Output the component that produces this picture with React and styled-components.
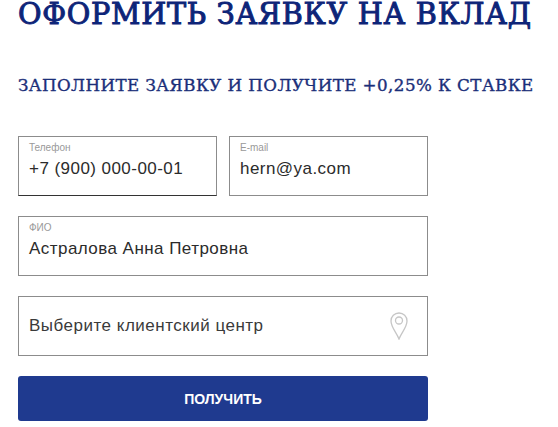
import styled, { createGlobalStyle } from "styled-components";

const Global = createGlobalStyle`
    html, body {
        margin: 0;
        padding: 0;
        background: #fff;
        overflow: hidden;
    }
`

const Page = styled.div`
    width: 558px;
    height: 427px;
    overflow: hidden;
    padding: 0 18px;
    box-sizing: border-box;
    font-family: "Liberation Sans", Arial, sans-serif;
`
const Title = styled.h1`
    margin: 0;
    font-family: "DejaVu Serif Condensed", "DejaVu Serif", serif;
    font-size: 29px;
    line-height: 28px;
    font-weight: 400;
    letter-spacing: 0.66px;
    -webkit-text-stroke: 0.9px #0d2478;
    color: #0d2478;
    white-space: nowrap;
    transform: scaleX(1.1);
    transform-origin: left center;
`
const Subtitle = styled.h2`
    margin: 46px 0 0;
    font-family: "DejaVu Serif Condensed", "DejaVu Serif", serif;
    font-size: 17.5px;
    line-height: 22px;
    font-weight: 400;
    letter-spacing: 0.42px;
    -webkit-text-stroke: 0.35px #1b2f7a;
    color: #1b2f7a;
    white-space: nowrap;
    transform: scaleX(1.06);
    transform-origin: left center;
`
const Form = styled.form`
    width: 410px;
    margin-top: 40px;
    display: flex;
    flex-direction: column;
    gap: 20px;
`
const Row = styled.div`
    display: grid;
    grid-template-columns: 1fr 1fr;
    gap: 12px;
`
const Field = styled.div`
    height: 60px;
    box-sizing: border-box;
    border: 1px solid #8c8c8c;
    border-bottom-color: ${({$active}) => $active ? '#333' : '#8c8c8c'};
    padding: 5px 10px 0;
    display: flex;
    flex-direction: column;
`
const Label = styled.label`
    font-size: 10px;
    line-height: 11px;
    color: #999;
`
const Value = styled.div`
    margin-top: 5px;
    font-size: 17px;
    line-height: 22px;
    letter-spacing: 0.45px;
    color: #2b2b2b;
    white-space: nowrap;
`
const SelectField = styled.div`
    height: 60px;
    box-sizing: border-box;
    border: 1px solid #8c8c8c;
    padding: 0 19px 0 10px;
    display: flex;
    align-items: center;
    justify-content: space-between;
`
const Placeholder = styled.span`
    font-size: 17px;
    letter-spacing: 0.5px;
    color: #3a3a3a;
`
const Submit = styled.button`
    height: 45px;
    border: 0;
    border-radius: 3px;
    background: #1f3a8f;
    color: #fff;
    font-family: "Liberation Sans", Arial, sans-serif;
    font-size: 14px;
    font-weight: 700;
    cursor: pointer;
`

const PinIcon = () => (
    <svg width="18" height="28" viewBox="0 0 18 28" fill="none" stroke="#c6c6c6" strokeWidth="1.3">
        <path d="M9 27 C7 21 1 15.5 1 9 C1 4.5 4.5 1 9 1 C13.5 1 17 4.5 17 9 C17 15.5 11 21 9 27 Z"/>
        <circle cx="9" cy="8.5" r="3.5"/>
    </svg>
)

const App = () => {
    return (
        <Page>
            <Global/>
            <Title>ОФОРМИТЬ ЗАЯВКУ НА ВКЛАД</Title>
            <Subtitle>ЗАПОЛНИТЕ ЗАЯВКУ И ПОЛУЧИТЕ +0,25% К СТАВКЕ</Subtitle>
            <Form>
                <Row>
                    <Field $active>
                        <Label>Телефон</Label>
                        <Value>+7 (900) 000-00-01</Value>
                    </Field>
                    <Field>
                        <Label>E-mail</Label>
                        <Value>hern@ya.com</Value>
                    </Field>
                </Row>
                <Field>
                    <Label>ФИО</Label>
                    <Value>Астралова Анна Петровна</Value>
                </Field>
                <SelectField>
                    <Placeholder>Выберите клиентский центр</Placeholder>
                    <PinIcon/>
                </SelectField>
                <Submit type="button">ПОЛУЧИТЬ</Submit>
            </Form>
        </Page>
    );
}

export default App;
